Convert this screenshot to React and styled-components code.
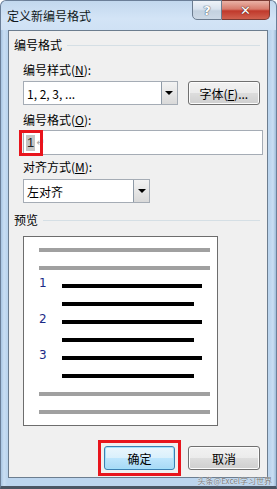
import React from "react";
import styled, { createGlobalStyle } from "styled-components";

const Global = createGlobalStyle`
  html, body { margin: 0; padding: 0; background: #ffffff; }
  body { font-family: "Noto Sans CJK SC", "Noto Sans", sans-serif; }
  * { box-sizing: border-box; }
`;

const Window = styled.div`
  position: relative;
  width: 277px;
  height: 489px;
  display: flex;
  flex-direction: column;
  padding: 0 8px 8px 7px;
  background: linear-gradient(to right, #a9c6e3 0px, #c9def3 3px, #bcd5ee 6px, #bcd5ee calc(100% - 6px), #c9def3 calc(100% - 3px), #9fbcd9 100%);
  border: 1px solid #6b7f98;
  border-bottom-width: 3px;
  border-bottom-color: #4a5563;
  border-radius: 6px 6px 0 0;
`;

const TitleBar = styled.div`
  height: 29px;
  display: flex;
  justify-content: space-between;
  align-items: flex-start;
  margin: 0 -8px 0 -7px;
  padding: 0 6px 0 6px;
  background: linear-gradient(to bottom, #c2d8ee 0%, #d3e4f6 60%, #cfe1f4 100%);
  border-radius: 6px 6px 0 0;
`;

const Title = styled.div`
  font-size: 12px;
  line-height: 14px;
  color: #101820;
  margin-top: 8px;
`;

const Caption = styled.div`
  display: flex;
  margin-top: -1px;
`;

const CapButton = styled.div`
  width: ${(p) => p.$w}px;
  height: 20px;
  display: flex;
  align-items: center;
  justify-content: center;
  border: 1px solid ${(p) => (p.$close ? "#7a3a33" : "#6c7d90")};
  border-left-width: ${(p) => (p.$close ? 0 : 1)}px;
  border-radius: ${(p) => (p.$close ? "0 0 5px 0" : "0 0 0 5px")};
  background: ${(p) =>
    p.$close
      ? "linear-gradient(to bottom, #e9b2a6 0%, #d77b6c 45%, #c0392b 55%, #d0614f 100%)"
      : "linear-gradient(to bottom, #eef3f8 0%, #d9e3ee 45%, #c3d1df 55%, #cdd9e6 100%)"};
  color: #ffffff;
  font-family: "DejaVu Sans", sans-serif;
  font-weight: bold;
  font-size: 13px;
`;

const CapGlyph = styled.span`
  color: #fff;
  text-shadow: 0 0 1px ${(p) => (p.$close ? "#4a1a14" : "#3a4a5c")}, 0 0 1px ${(p) => (p.$close ? "#4a1a14" : "#3a4a5c")};
`;

const Client = styled.div`
  flex: 1;
  display: flex;
  flex-direction: column;
  background: #f0f0f0;
  border: 1px solid #6c7d8f;
  padding: 0 7px 0 5px;
`;

const GroupHeader = styled.div`
  display: flex;
  align-items: center;
  gap: 5px;
  height: 14px;
  margin-top: ${(p) => p.$mt}px;
  font-size: 12px;
  line-height: 14px;
  color: #000;
  &::after {
    content: "";
    flex: 1;
    height: 1px;
    background: #d5dfe5;
  }
`;

const Field = styled.div`
  margin-left: 9px;
  display: flex;
  flex-direction: column;
`;

const Label = styled.div`
  font-size: 12px;
  line-height: 16px;
  height: 16px;
  margin-top: ${(p) => p.$mt}px;
  color: #000;
  u { text-decoration: underline; text-underline-offset: 1px; }
`;

const Row = styled.div`
  display: flex;
  align-items: center;
  gap: 10px;
  margin-top: ${(p) => p.$mt}px;
`;

const Combo = styled.div`
  width: ${(p) => p.$w}px;
  height: 24px;
  display: flex;
  align-items: stretch;
  background: #fff;
  border: 1px solid #a5acb5;
`;

const ComboText = styled.div`
  flex: 1;
  padding-left: 3px;
  display: flex;
  align-items: center;
  font-size: 12px;
  color: #000;
  font-family: "Noto Sans CJK SC", "Noto Sans", sans-serif;
`;

const DropButton = styled.div`
  width: 16px;
  display: flex;
  align-items: center;
  justify-content: center;
  border-left: 1px solid #8e9aa7;
  background: linear-gradient(to bottom, #f3f3f3 0%, #e6e6e6 50%, #d9d9d9 100%);
  &::after {
    content: "";
    border-left: 4px solid transparent;
    border-right: 4px solid transparent;
    border-top: 4px solid #000;
  }
`;

const Button = styled.div`
  width: ${(p) => p.$w}px;
  height: 24px;
  display: flex;
  align-items: center;
  justify-content: center;
  font-size: 12px;
  color: #000;
  border: 1px solid ${(p) => (p.$default ? "#3c7fb1" : "#707070")};
  border-radius: 3px;
  background: ${(p) =>
    p.$default
      ? "linear-gradient(to bottom, #eaf6fd 0%, #d9f0fc 50%, #bee6fd 50%, #a7d9f5 100%)"
      : "linear-gradient(to bottom, #f2f2f2 0%, #ebebeb 50%, #dddddd 50%, #cfcfcf 100%)"};
  box-shadow: inset 0 0 0 1px ${(p) => (p.$default ? "#a3e0fb" : "#fcfcfc")};
  u { text-decoration: underline; text-underline-offset: 1px; }
`;

const InputWrap = styled.div`
  position: relative;
  margin-top: 2px;
`;

const Input = styled.div`
  height: 25px;
  width: 240px;
  background: #fff;
  border: 1px solid #a5acb5;
  display: flex;
  align-items: center;
  padding-left: 2px;
  font-size: 12px;
`;

const Sel = styled.span`
  background: #c5c5c5;
  color: #222;
  padding: 0 1px;
  line-height: 16px;
  font-family: "Liberation Sans", sans-serif;
  font-size: 13px;
`;

const Return = styled.span`
  color: #a8a8a8;
  font-size: 10px;
  margin-left: 1px;
  font-family: "DejaVu Sans", sans-serif;
`;

const RedMark = styled.span`
  position: absolute;
  left: -4px;
  top: 0;
  width: 24px;
  height: 26px;
  border: 3px solid #e8141c;
  pointer-events: none;
`;

const Preview = styled.div`
  margin: 9px 0 0 9px;
  width: 195px;
  height: 190px;
  background: #fff;
  border: 1px solid #6d6d6d;
  padding: 11px 7px 11px 15px;
  display: flex;
  flex-direction: column;
  gap: 14px;
`;

const GrayBar = styled.div`
  height: 4px;
  background: #a0a0a0;
`;

const NumRow = styled.div`
  height: 4px;
  display: flex;
  align-items: flex-start;
`;

const Num = styled.span`
  width: 23px;
  height: 12px;
  margin-top: -7px;
  line-height: 12px;
  font-size: 12px;
  color: #1b2a86;
  font-family: "DejaVu Sans", sans-serif;
`;

const Bar = styled.div`
  height: 4px;
  width: ${(p) => p.$w}px;
  background: #000;
  margin-left: ${(p) => p.$ml || 0}px;
`;

const Footer = styled.div`
  display: flex;
  justify-content: flex-end;
  gap: 13px;
  margin-top: 20px;
`;

const Highlight = styled.div`
  outline: 3px solid #e8141c;
  outline-offset: 3px;
`;

const Watermark = styled.span`
  position: absolute;
  right: 4px;
  bottom: 1px;
  font-size: 8px;
  line-height: 9px;
  color: #7a7a7a;
  text-shadow: 0 0 1px #fff;
  font-family: "Noto Sans CJK SC", sans-serif;
`;

export default function App() {
  return (
    <>
      <Global />
      <Window>
        <TitleBar>
          <Title>定义新编号格式</Title>
          <Caption>
            <CapButton $w={30}>
              <CapGlyph>?</CapGlyph>
            </CapButton>
            <CapButton $w={48} $close>
              <CapGlyph $close>✕</CapGlyph>
            </CapButton>
          </Caption>
        </TitleBar>
        <Client>
          <GroupHeader $mt={7}>编号格式</GroupHeader>
          <Field>
            <Label $mt={10}>
              编号样式(<u>N</u>):
            </Label>
            <Row $mt={3}>
              <Combo $w={156}>
                <ComboText>1, 2, 3, ...</ComboText>
                <DropButton />
              </Combo>
              <Button $w={73}>
                字体(<u>F</u>)...
              </Button>
            </Row>
            <Label $mt={7}>
              编号格式(<u>O</u>):
            </Label>
            <InputWrap>
              <Input>
                <Sel>1</Sel>
                <Return>↵</Return>
              </Input>
              <RedMark />
            </InputWrap>
            <Label $mt={4}>
              对齐方式(<u>M</u>):
            </Label>
            <Row $mt={4}>
              <Combo $w={127}>
                <ComboText>左对齐</ComboText>
                <DropButton />
              </Combo>
            </Row>
          </Field>
          <GroupHeader $mt={10}>预览</GroupHeader>
          <Preview>
            <GrayBar />
            <GrayBar />
            <NumRow>
              <Num>1</Num>
              <Bar $w={140} />
            </NumRow>
            <NumRow>
              <Bar $w={132} $ml={23} />
            </NumRow>
            <NumRow>
              <Num>2</Num>
              <Bar $w={140} />
            </NumRow>
            <NumRow>
              <Bar $w={132} $ml={23} />
            </NumRow>
            <NumRow>
              <Num>3</Num>
              <Bar $w={140} />
            </NumRow>
            <NumRow>
              <Bar $w={132} $ml={23} />
            </NumRow>
            <GrayBar />
            <GrayBar />
          </Preview>
          <Footer>
            <Highlight>
              <Button $w={71} $default>
                确定
              </Button>
            </Highlight>
            <Button $w={72}>取消</Button>
          </Footer>
        </Client>
        <Watermark>头条@Excel学习世界</Watermark>
      </Window>
    </>
  );
}
